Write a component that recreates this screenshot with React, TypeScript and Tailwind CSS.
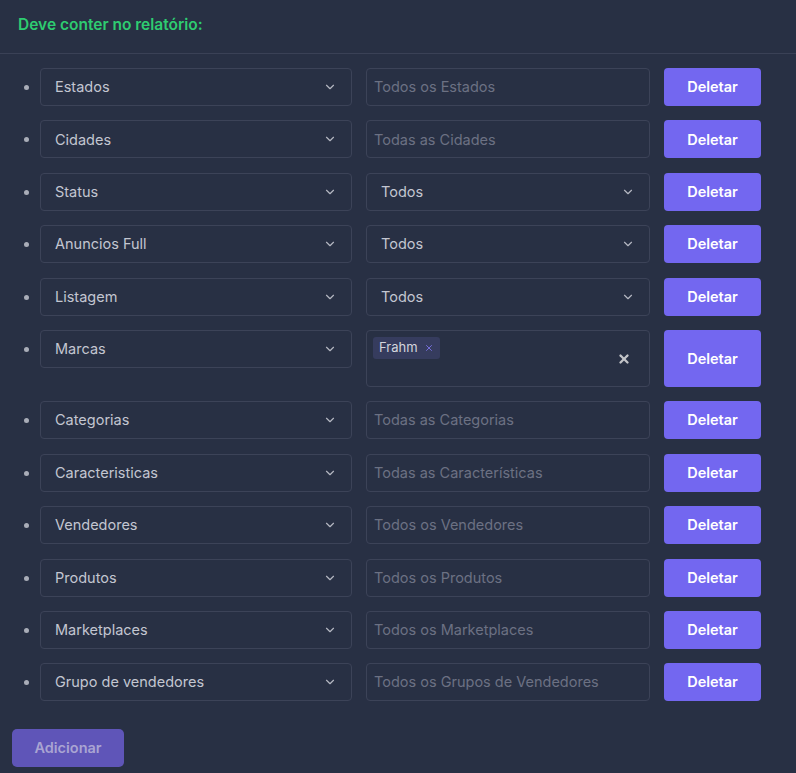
import { ChevronDown, X } from "lucide-react";

type Row = {
  field: string;
  kind: "input" | "select" | "multi";
  value: string;
};

const rows: Row[] = [
  { field: "Estados", kind: "input", value: "Todos os Estados" },
  { field: "Cidades", kind: "input", value: "Todas as Cidades" },
  { field: "Status", kind: "select", value: "Todos" },
  { field: "Anuncios Full", kind: "select", value: "Todos" },
  { field: "Listagem", kind: "select", value: "Todos" },
  { field: "Marcas", kind: "multi", value: "Frahm" },
  { field: "Categorias", kind: "input", value: "Todas as Categorias" },
  { field: "Caracteristicas", kind: "input", value: "Todas as Características" },
  { field: "Vendedores", kind: "input", value: "Todos os Vendedores" },
  { field: "Produtos", kind: "input", value: "Todos os Produtos" },
  { field: "Marketplaces", kind: "input", value: "Todos os Marketplaces" },
  { field: "Grupo de vendedores", kind: "input", value: "Todos os Grupos de Vendedores" },
];

function FakeSelect({ label, className }: { label: string; className: string }) {
  return (
    <div
      className={`flex h-[38px] items-center justify-between rounded-[4px] border border-[#3c4358] bg-[#283044] pl-[14px] pr-[14px] text-[14.5px] text-[#c3c6d1] ${className}`}
    >
      <span>{label}</span>
      <ChevronDown className="h-[14px] w-[14px] text-[#b4b7c2]" strokeWidth={2} />
    </div>
  );
}

export default function App() {
  return (
    <div
      className="min-h-[773px] w-[796px] bg-[#283044]"
      style={{ fontFamily: "Inter, 'Noto Sans', sans-serif" }}
    >
      <div className="flex h-[54px] items-center border-b border-[#3a4156] pl-[18px] pb-[3px]">
        <h2 className="text-[15.5px] font-semibold text-[#2ecc71]">Deve conter no relatório:</h2>
      </div>

      <ul className="flex flex-col gap-[14.4px] pt-[14px] pl-[24px]">
        {rows.map((row) => (
          <li key={row.field} className="flex items-start">
            <span className="mt-[17px] mr-[11px] h-[5px] w-[5px] rounded-full bg-[#a9adb8]" />
            <FakeSelect label={row.field} className="w-[312px]" />
            <div className="ml-[14px] w-[284px]">
              {row.kind === "input" && (
                <div className="flex h-[38px] items-center rounded-[4px] border border-[#3c4358] px-[7px] text-[14.5px] text-[#6c7183]">
                  {row.value}
                </div>
              )}
              {row.kind === "select" && <FakeSelect label={row.value} className="w-[284px]" />}
              {row.kind === "multi" && (
                <div className="flex h-[57px] items-start justify-between rounded-[4px] border border-[#3c4358] pl-[6px] pr-[18px] pt-[6px]">
                  <span className="flex h-[22px] items-center gap-[6px] rounded-[3px] bg-[#363c5e] px-[6px] text-[13px] text-[#d3d5dc]">
                    {row.value}
                    <X className="h-[10px] w-[10px] text-[#8278f0]" strokeWidth={2} />
                  </span>
                  <X className="mt-[15px] h-[14px] w-[14px] text-[#c3c4c8]" strokeWidth={4} />
                </div>
              )}
            </div>
            <button
              className={`ml-[14px] flex w-[97px] items-center justify-center rounded-[4px] bg-[#7367f0] text-[14.5px] font-semibold text-white ${
                row.kind === "multi" ? "h-[57px]" : "h-[38px]"
              }`}
            >
              Deletar
            </button>
          </li>
        ))}
      </ul>

      <div className="pl-[12px] pt-[28px]">
        <button className="flex h-[38px] w-[112px] items-center justify-center rounded-[5px] bg-[#5f55b8] text-[14.5px] font-semibold text-[#a9a4d2]">
          Adicionar
        </button>
      </div>
    </div>
  );
}
